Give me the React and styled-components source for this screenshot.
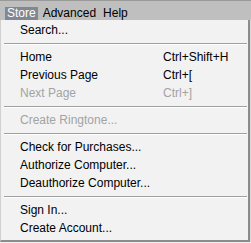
import React from 'react';
import styled, { createGlobalStyle } from 'styled-components';

const Global = createGlobalStyle`
    html, body { margin: 0; padding: 0; background: #3a3a3a; }
    body { font-family: "Liberation Sans", Arial, sans-serif; font-size: 12px; }
`;

const Screen = styled.div`
    width: 251px;
    height: 243px;
    overflow: hidden;
    display: flex;
    flex-direction: column;
    background: #d8d8d8;
`;

const MenuBar = styled.div`
    height: 19px;
    display: flex;
    align-items: flex-end;
    gap: 3px;
    padding: 0 0 0 5px;
    background: #bfbfbf;
    border-top: 1px solid #9a9a9a;
    flex-shrink: 0;
`;

const BarItem = styled.div`
    height: 13px;
    line-height: 13px;
    padding: 0 2px;
    color: ${p => (p.$open ? '#ffffff' : '#000000')};
    background: ${p => (p.$open ? '#7f8993' : 'transparent')};
    font-size: 12px;
`;

const Panel = styled.div`
    width: 247px;
    height: 219px;
    padding-top: 1px;
    background: #f2f2f2;
    border-left: 1px solid #d0d0d0;
    border-right: 2px solid #8c8c8c;
    border-bottom: 2px solid #8c8c8c;
    display: flex;
    flex-direction: column;
    flex-shrink: 0;
`;

const Row = styled.div`
    height: 18px;
    display: flex;
    align-items: center;
    padding-left: 19px;
    color: ${p => (p.$disabled ? '#a3a3a3' : '#000000')};
    white-space: nowrap;
`;

const Label = styled.span`
    width: 143px;
`;

const Shortcut = styled.span``;

const Separator = styled.div`
    height: 9px;
    display: flex;
    align-items: center;
    padding: 0 1px 0 3px;
    &::before {
        content: '';
        flex: 1;
        height: 1px;
        background: #a0a0a0;
        box-shadow: 0 1px 0 #ffffff;
    }
`;

const Below = styled.div`
    flex: 1;
    background: linear-gradient(#f0f0f0 0 1px, #2b2b2b 1px);
`;

const items = [
    { label: 'Search...' },
    'sep',
    { label: 'Home', key: 'Ctrl+Shift+H' },
    { label: 'Previous Page', key: 'Ctrl+[' },
    { label: 'Next Page', key: 'Ctrl+]', disabled: true },
    'sep',
    { label: 'Create Ringtone...', disabled: true },
    'sep',
    { label: 'Check for Purchases...' },
    { label: 'Authorize Computer...' },
    { label: 'Deauthorize Computer...' },
    'sep',
    { label: 'Sign In...' },
    { label: 'Create Account...' },
];

export default function App() {
    return (
        <Screen>
            <Global />
            <MenuBar>
                <BarItem $open>Store</BarItem>
                <BarItem>Advanced</BarItem>
                <BarItem>Help</BarItem>
            </MenuBar>
            <Panel>
                {items.map((it, i) =>
                    it === 'sep' ? (
                        <Separator key={i} />
                    ) : (
                        <Row key={i} $disabled={it.disabled}>
                            <Label>{it.label}</Label>
                            {it.key && <Shortcut>{it.key}</Shortcut>}
                        </Row>
                    )
                )}
            </Panel>
            <Below />
        </Screen>
    );
}
